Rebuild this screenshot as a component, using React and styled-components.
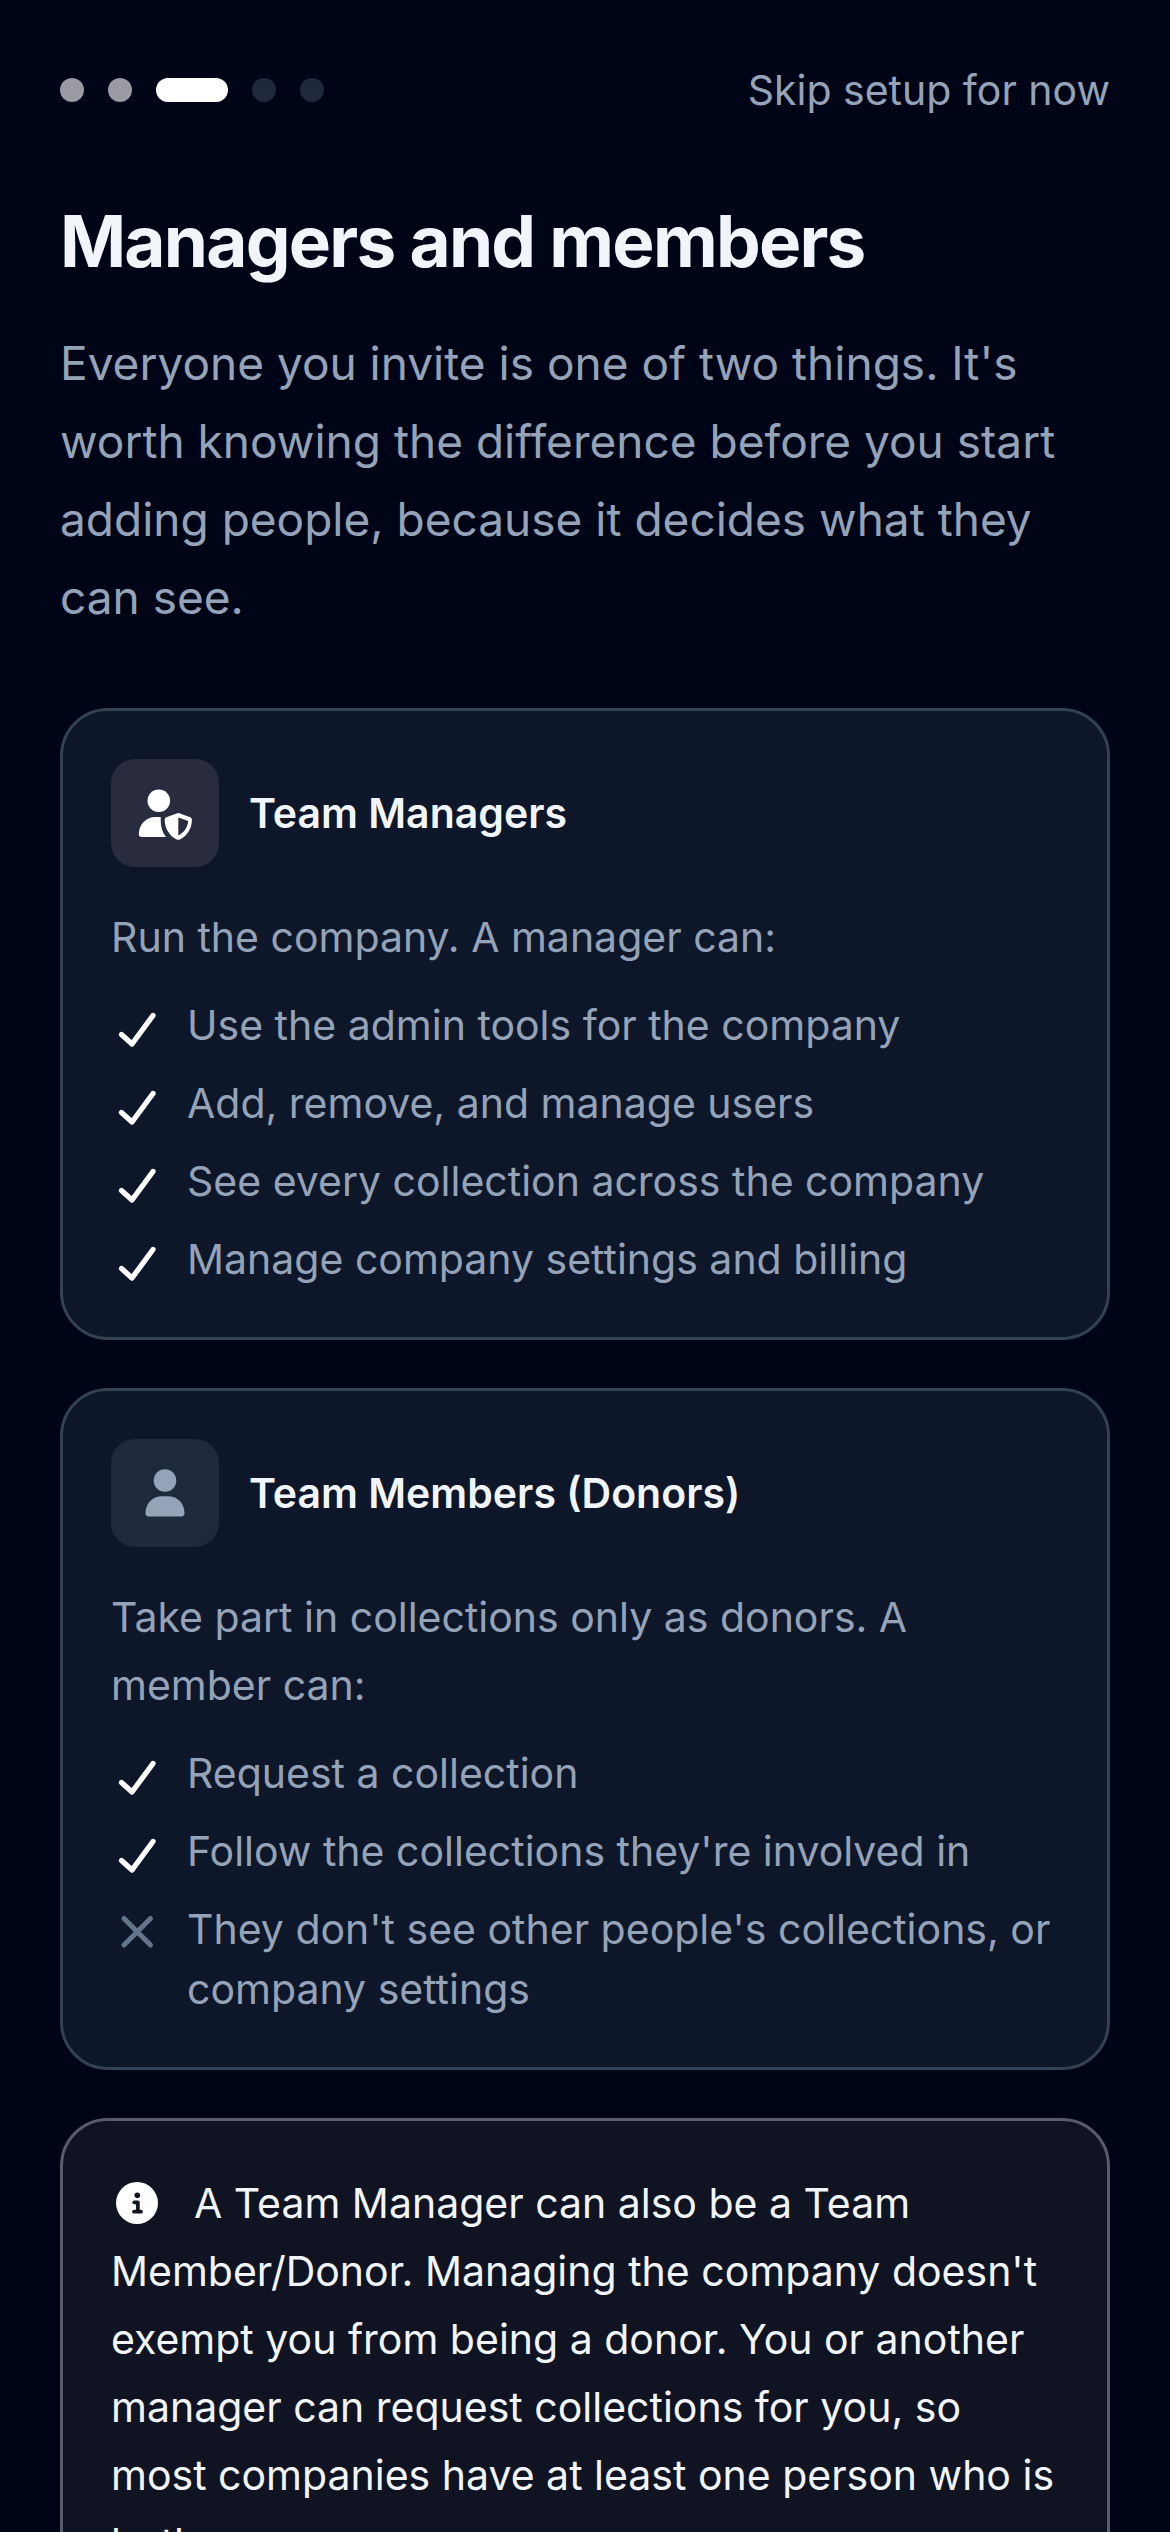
import React from "react";

/* 스타일 */
import styled, { createGlobalStyle } from "styled-components";

const theme = {
  bg: "#000417",
  card: "#0e1729",
  line: "#334155",
  chip: "#1e293b",
  title: "#f1f5f9",
  text: "#94a3b8",
  mute: "#64748b",
  white: "#ffffff",
};

const TOTAL_STEP = 5;
const CURRENT_STEP = 2;

const managerList = [
  { can: true, text: "Use the admin tools for the company" },
  { can: true, text: "Add, remove, and manage users" },
  { can: true, text: "See every collection across the company" },
  { can: true, text: "Manage company settings and billing" },
];

const memberList = [
  { can: true, text: "Request a collection" },
  { can: true, text: "Follow the collections they're involved in" },
  { can: false, text: "They don't see other people's collections, or company settings" },
];

/* 아이콘 */
const UserShieldIcon = () => (
  <svg width="54" height="54" viewBox="0 0 54 54" fill="currentColor" aria-hidden="true">
    <circle cx="20.8" cy="14.8" r="11.3" />
    <path d="M17.500 31h5.200v1.500c0 8 1.500 14 5.500 18.500H3.700c-1.800 0-2.900-1.100-2.900-2.800C.8 38.500 8 31 17.500 31z" />
    <path
      fillRule="evenodd"
      d="M39.200 27.200a3 3 0 0 1 2.200 0l10.800 4c1 .4 1.700 1.200 1.700 2.300 0 8-3.500 15.700-12 19.900a3.500 3.500 0 0 1-3.200 0c-8.500-4.200-12-11.900-12-19.900 0-1.100.7-1.900 1.700-2.300zM40.300 31.400v18c6-2.900 9.300-8 9.900-14.400z"
    />
  </svg>
);

const UserIcon = () => (
  <svg width="54" height="54" viewBox="0 0 54 54" fill="currentColor" aria-hidden="true">
    <circle cx="27" cy="14.5" r="11.3" />
    <path d="M24 30.200h6c9.500 0 16.500 7.300 16.500 17 0 2-1.100 3.200-3 3.200h-33c-1.900 0-3-1.200-3-3.200 0-9.700 7-17 16.500-17z" />
  </svg>
);

const CheckIcon = () => (
  <svg width="52" height="60" viewBox="0 0 52 60" fill="none" stroke="currentColor" strokeWidth="5.3" strokeLinecap="round" strokeLinejoin="round" aria-hidden="true">
    <path d="M10.500 39.500L21 49L42 20.500" />
  </svg>
);

const XIcon = () => (
  <svg width="52" height="60" viewBox="0 0 52 60" fill="none" stroke="currentColor" strokeWidth="5" strokeLinecap="round" aria-hidden="true">
    <path d="M13 19.500L39.500 46M39.500 19.500L13 46" />
  </svg>
);

const InfoIcon = () => (
  <svg width="42" height="42" viewBox="0 0 42 42" aria-hidden="true">
    <circle cx="21" cy="21" r="21" fill="#ffffff" />
    <circle cx="21.300" cy="13.300" r="2.800" fill="#101322" />
    <path d="M18.200 20.300H21.900V29.700M18 29.700H25" fill="none" stroke="#101322" strokeWidth="3.700" strokeLinecap="round" strokeLinejoin="round" />
  </svg>
);

function RoleCard({ icon, highlight, title, desc, list }) {
  return (
    <Card>
      <CardHead>
        <IconBox $highlight={highlight}>{icon}</IconBox>
        <CardTitle>{title}</CardTitle>
      </CardHead>
      <CardDesc>{desc}</CardDesc>
      <RoleList>
        {list.map((item) => (
          <RoleItem key={item.text} $can={item.can}>
            {item.can ? <CheckIcon /> : <XIcon />}
            <span>{item.text}</span>
          </RoleItem>
        ))}
      </RoleList>
    </Card>
  );
}

function App() {
  return (
    <>
      <GlobalStyle />
      <Page>
        <TopBar>
          <Steps role="img" aria-label={`Step ${CURRENT_STEP + 1} of ${TOTAL_STEP}`}>
            {Array.from({ length: TOTAL_STEP }, (_, i) => (
              <Step key={i} $done={i < CURRENT_STEP} $active={i === CURRENT_STEP} />
            ))}
          </Steps>
          <SkipButton type="button">Skip setup for now</SkipButton>
        </TopBar>

        <Title>Managers and members</Title>
        <Lead>
          Everyone you invite is one of two things. It's worth knowing the difference before you
          start adding people, because it decides what they can see.
        </Lead>

        <Cards>
          <RoleCard
            icon={<UserShieldIcon />}
            highlight
            title="Team Managers"
            desc="Run the company. A manager can:"
            list={managerList}
          />
          <RoleCard
            icon={<UserIcon />}
            title="Team Members (Donors)"
            desc="Take part in collections only as donors. A member can:"
            list={memberList}
          />
          <Note>
            <InfoIcon />A Team Manager can also be a Team Member/Donor. Managing the company
            doesn't exempt you from being a donor. You or another manager can request collections
            for you, so most companies have at least one person who is both.
          </Note>
        </Cards>
      </Page>
    </>
  );
}

const GlobalStyle = createGlobalStyle`
  * {
    box-sizing: border-box;
    margin: 0;
    padding: 0;
  }

  body {
    background: ${theme.bg};
    color: ${theme.text};
    font-family: Inter, "Liberation Sans", sans-serif;
    font-size: 41px;
  }

  svg {
    flex-shrink: 0;
  }
`;

const Page = styled.main`
  min-height: 100vh;
  padding: 60px;
`;

const TopBar = styled.header`
  display: flex;
  align-items: center;
  justify-content: space-between;
`;

const Steps = styled.div`
  display: flex;
  gap: 24px;
`;

const Step = styled.span`
  width: ${({ $active }) => ($active ? "72px" : "24px")};
  height: 24px;
  border-radius: 12px;
  background: ${({ $active, $done }) =>
    $active ? theme.white : $done ? "rgba(255, 255, 255, 0.6)" : theme.chip};
`;

const SkipButton = styled.button`
  border: 0;
  background: none;
  color: ${theme.text};
  font: inherit;
  line-height: 60px;
  cursor: pointer;
`;

const Title = styled.h1`
  margin-top: 76px;
  color: ${theme.title};
  font-size: 71px;
  font-weight: 700;
  line-height: 90px;
  letter-spacing: -0.025em;
`;

const Lead = styled.p`
  margin-top: 38px;
  font-size: 46px;
  line-height: 78px;
`;

const Cards = styled.div`
  display: flex;
  flex-direction: column;
  gap: 48px;
  margin-top: 72px;
`;

const Card = styled.section`
  padding: 48px;
  border: 3px solid ${theme.line};
  border-radius: 48px;
  background: ${theme.card};
`;

const CardHead = styled.div`
  display: flex;
  align-items: center;
  gap: 30px;
`;

const IconBox = styled.div`
  display: flex;
  align-items: center;
  justify-content: center;
  width: 108px;
  height: 108px;
  border-radius: 24px;
  background: ${({ $highlight }) => ($highlight ? "#282c3e" : theme.chip)};
  color: ${({ $highlight }) => ($highlight ? theme.white : theme.text)};
`;

const CardTitle = styled.h2`
  color: ${theme.title};
  font-size: 41px;
  font-weight: 600;
  line-height: 60px;
`;

const CardDesc = styled.p`
  margin-top: 36px;
  line-height: 68px;
`;

const RoleList = styled.ul`
  display: flex;
  flex-direction: column;
  gap: 18px;
  margin-top: 24px;
  list-style: none;
`;

const RoleItem = styled.li`
  display: flex;
  align-items: flex-start;
  gap: 24px;
  line-height: 60px;

  svg {
    color: ${({ $can }) => ($can ? theme.white : theme.mute)};
  }
`;

const Note = styled.p`
  padding: 48px;
  border: 3px solid #585b69;
  border-radius: 48px;
  background: #101322;
  color: ${theme.title};
  line-height: 68px;

  svg {
    margin: 0 36px 0 5px;
    vertical-align: -6px;
  }
`;

export default App;
